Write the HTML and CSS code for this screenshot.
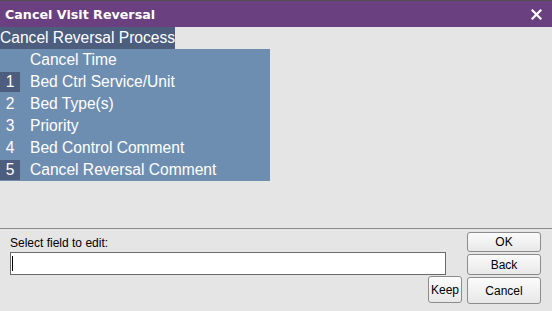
FILE: index.html
```html
<!DOCTYPE html>
<html>
<head>
<meta charset="utf-8">
<link rel="stylesheet" href="styles.css">
</head>
<body>
<div class="window">
  <div class="titlebar">
    <span class="title">Cancel Visit Reversal</span>
    <span class="close">
      <svg width="11" height="11" viewBox="0 0 11 11"><path d="M1.5 1.5 L9.5 9.5 M9.5 1.5 L1.5 9.5" stroke="#fff" stroke-width="2.2" stroke-linecap="square"/></svg>
    </span>
  </div>
  <div class="content">
    <div class="process">Cancel Reversal Process</div>
    <div class="list">
      <div class="row"><span class="num"></span><span class="label">Cancel Time</span></div>
      <div class="row"><span class="num sel">1</span><span class="label">Bed Ctrl Service/Unit</span></div>
      <div class="row"><span class="num">2</span><span class="label">Bed Type(s)</span></div>
      <div class="row"><span class="num">3</span><span class="label">Priority</span></div>
      <div class="row"><span class="num">4</span><span class="label">Bed Control Comment</span></div>
      <div class="row"><span class="num sel">5</span><span class="label">Cancel Reversal Comment</span></div>
    </div>
  </div>
  <div class="bottom">
    <div class="left">
      <div class="prompt">Select field to edit:</div>
      <div class="input"><span class="caret"></span></div>
      <div class="keeprow"><button class="btn keep">Keep</button></div>
    </div>
    <div class="right">
      <button class="btn ok">OK</button>
      <button class="btn back">Back</button>
      <button class="btn cancel">Cancel</button>
    </div>
  </div>
</div>
</body>
</html>
```
FILE: styles.css
```css
html, body {
  margin: 0;
  padding: 0;
}
body {
  width: 552px;
  height: 311px;
  overflow: hidden;
  background: #e5e5e5;
  font-family: "Liberation Sans", Arial, sans-serif;
}
.window {
  display: flex;
  flex-direction: column;
  height: 311px;
}
.titlebar {
  height: 26px;
  border-top: 1px solid #505050;
  background: #6b4080;
  display: flex;
  align-items: center;
  justify-content: space-between;
  padding: 0 10px 0 5px;
}
.title {
  color: #fff;
  font-family: "DejaVu Sans", Verdana, sans-serif;
  font-weight: bold;
  font-size: 12.7px;
}
.close {
  display: flex;
  align-items: center;
}
.content {
  height: 202px;
  border-bottom: 1px solid #8a8a8a;
  box-sizing: border-box;
  display: flex;
  flex-direction: column;
  align-items: flex-start;
}
.process {
  height: 22px;
  line-height: 22px;
  background: #4c5d7e;
  color: #fff;
  font-size: 15.6px;
}
.list {
  width: 270px;
  background: #6e8eb1;
  color: #fff;
  font-size: 15.6px;
}
.row {
  height: 22px;
  display: flex;
  align-items: center;
}
.num {
  width: 20px;
  height: 20px;
  line-height: 20px;
  text-align: center;
}
.num.sel {
  background: #4c5d7e;
}
.label {
  margin-left: 10px;
}
.bottom {
  flex: 1;
  display: flex;
  padding: 2px 11px 0 10px;
}
.left {
  width: 452px;
  display: flex;
  flex-direction: column;
}
.prompt {
  font-size: 12px;
  color: #000;
  height: 14px;
  margin-top: 5px;
  line-height: 14px;
}
.input {
  width: 436px;
  height: 23px;
  box-sizing: border-box;
  border: 1px solid #6a6a6a;
  background: #fff;
  margin-top: 2px;
  display: flex;
  align-items: center;
  padding-left: 1px;
}
.caret {
  width: 1px;
  height: 15px;
  background: #000;
}
.keeprow {
  display: flex;
  justify-content: flex-end;
  margin-top: 1px;
}
.right {
  margin-left: 5px;
  width: 74px;
  display: flex;
  flex-direction: column;
  gap: 2px;
  padding-top: 1px;
}
.btn {
  font-family: "Liberation Sans", Arial, sans-serif;
  font-size: 12px;
  color: #000;
  border: 1px solid #8c8c8c;
  border-radius: 3px;
  background: linear-gradient(#fbfbfb, #e8e8e8);
  padding: 0;
  margin: 0;
  box-sizing: border-box;
}
.ok { height: 20px; }
.back { height: 21px; }
.cancel { height: 27px; }
.keep {
  width: 34px;
  height: 27px;
}
```
